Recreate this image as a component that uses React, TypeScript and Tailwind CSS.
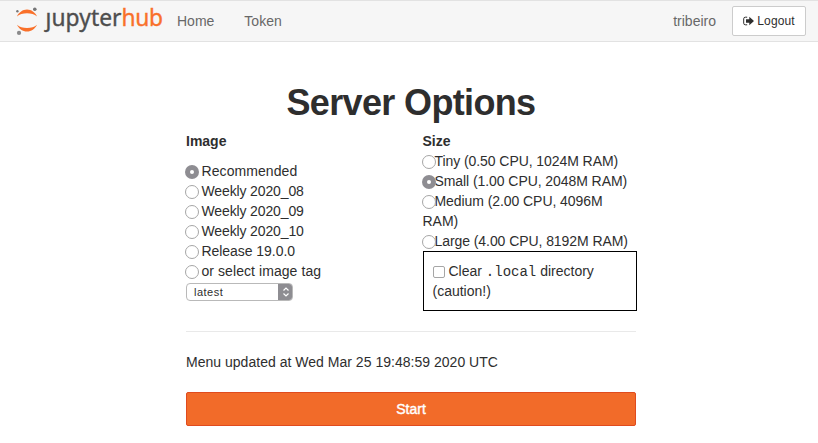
import type { ReactNode } from 'react';

function JupyterLogo() {
  return (
    <svg className="block h-[40px] w-[166px]" viewBox="0 0 166 40" role="img" aria-label="jupyterhub">
      <g transform="translate(0 0.4)">
        <path d="M17 15C19 11 22.700 8.200 27 8.200S35 11 37 15C34.600 12.800 31 11.900 27 11.900S19.400 12.800 17 15Z" fill="#f9702a" />
        <path d="M17 23.400C19.400 25.600 23 26.500 27 26.500S34.600 25.600 37 23.400C35 27.400 31.300 30.200 27 30.200S19 27.400 17 23.400Z" fill="#f9702a" />
        <circle cx="17.400" cy="9.800" r="1.200" fill="#767677" />
        <circle cx="34.800" cy="7.900" r="1.800" fill="#767677" />
        <circle cx="19" cy="31.500" r="2.100" fill="#8a8a8b" />
      </g>
      <text x="45.500" y="25.300" fill="#4e4e4e" stroke="#4e4e4e" strokeWidth="0.350" fontSize="22.800" textLength="76" lengthAdjust="spacing" className="font-['Noto_Sans','Open_Sans',sans-serif]">ȷupyter</text>
      <text x="121.500" y="25.300" fill="#f9702a" stroke="#f9702a" strokeWidth="0.350" fontSize="22.800" textLength="41.500" lengthAdjust="spacing" className="font-['Noto_Sans','Open_Sans',sans-serif]">hub</text>
    </svg>
  );
}

function Radio({ checked = false }: { checked?: boolean }) {
  return (
    <span
      className={
        checked
          ? 'relative top-[1px] flex size-[14px] shrink-0 items-center justify-center rounded-full bg-[#8e8d92]'
          : 'relative top-[1px] size-[14px] shrink-0 rounded-full border border-[#a6a6a6] bg-white'
      }
    >
      {checked && <span className="size-[4px] rounded-full bg-white" />}
    </span>
  );
}

function ImageOption({ checked, children }: { checked?: boolean; children: ReactNode }) {
  return (
    <label className="-ml-px flex h-5 items-center gap-[2.500px] whitespace-nowrap">
      <Radio checked={checked} />
      <span>{children}</span>
    </label>
  );
}

function SizeOption({ checked, children }: { checked?: boolean; children: ReactNode }) {
  return (
    <label className="-ml-px flex h-5 items-center whitespace-nowrap">
      <Radio checked={checked} />
      <span className="-ml-[1.500px] tracking-[-0.070px]">{children}</span>
    </label>
  );
}

export default function App() {
  return (
    <div className="h-[443px] overflow-hidden bg-white font-['Liberation_Sans',Arial,sans-serif] text-[14px] leading-5 text-[#2e2e2e]">
      <nav className="flex h-[42px] items-center border-y border-[#e2e2e2] bg-[#f6f6f6] text-[#686868]">
        <JupyterLogo />
        <a className="ml-[11px]">Home</a>
        <a className="ml-[30px]">Token</a>
        <span className="mr-[16px] ml-auto">tribeiro</span>
        <button className="mr-3 flex h-[30px] w-[74px] items-center justify-center gap-[3px] rounded-[2px] border border-[#cccccc] bg-white text-[12px] tracking-[0.100px] text-[#2e2e2e]">
          <svg className="block h-[10px] w-[11px]" viewBox="0 0 11 10">
            <path d="M4.200 1.200H2.300Q.7 1.200.7 2.800V7.200Q.7 8.800 2.300 8.800H4.200" fill="none" stroke="currentColor" />
            <path d="M6.300.8 11 5 6.300 9.200V6.700H3V3.300H6.300Z" fill="currentColor" />
          </svg>
          <span>Logout</span>
        </button>
      </nav>

      <main className="ml-[186px] w-[450px]">
        <h1 className="mt-[41px] text-center text-[36px] leading-10 font-bold tracking-[-0.650px] whitespace-nowrap">Server Options</h1>
        <div className="mt-2 flex">
          <section className="w-[237px] shrink-0">
            <h2 className="mb-[10px] font-bold">Image</h2>
            <ImageOption checked><span className="tracking-[0.080px]">Recommended</span></ImageOption>
            <ImageOption><span className="tracking-[-0.130px]">Weekly 2020_08</span></ImageOption>
            <ImageOption><span className="tracking-[-0.130px]">Weekly 2020_09</span></ImageOption>
            <ImageOption><span className="tracking-[-0.130px]">Weekly 2020_10</span></ImageOption>
            <ImageOption><span className="tracking-[-0.050px]">Release 19.0.0</span></ImageOption>
            <ImageOption><span className="tracking-[0.070px]">or select image tag</span></ImageOption>
            <div className="mt-[2px] flex h-[18px] w-[107px] items-center justify-between overflow-hidden rounded-[4px] border border-[#b9b9b9] bg-white pl-[7px] text-[11px] tracking-[0.5px]">
              <span>latest</span>
              <span className="-mr-px flex h-[18px] w-[15px] items-center justify-center bg-[#8e8d92]">
                <svg className="h-[10px] w-[8px]" viewBox="0 0 8 10" fill="none" stroke="white" strokeWidth="1.200">
                  <path d="M1.500 3.500 4 1 6.500 3.500M1.500 6.500 4 9 6.500 6.500" />
                </svg>
              </span>
            </div>
          </section>
          <section className="w-[214px] shrink-0">
            <h2 className="-ml-[0.500px] font-bold">Size</h2>
            <SizeOption>Tiny (0.50 CPU, 1024M RAM)</SizeOption>
            <SizeOption checked>Small (1.00 CPU, 2048M RAM)</SizeOption>
            <SizeOption>Medium (2.00 CPU, 4096M</SizeOption>
            <div className="-ml-[0.500px]">RAM)</div>
            <SizeOption>Large (4.00 CPU, 8192M RAM)</SizeOption>
            <div className="h-[60px] border border-black px-[9px] py-[9px] whitespace-nowrap">
              <div className="flex h-5 items-center">
                <span className="relative top-px mr-[3.500px] size-[12px] rounded-[2px] border border-[#a6a6a6] bg-white" />
                <span>Clear <code className="font-['Liberation_Mono',monospace] text-[14px]">.local</code> directory</span>
              </div>
              <div className="-ml-[0.500px]">(caution!)</div>
            </div>
          </section>
        </div>
        <hr className="mt-5 border-[#e9e9e9]" />
        <p className="mt-5 tracking-[0.020px]">Menu updated at Wed Mar 25 19:48:59 2020 UTC</p>
        <button className="mt-5 block h-[34px] w-full rounded-[2px] border border-[#e04b1e] bg-[#f26b29] text-white [-webkit-text-stroke:0.4px_white]">Start</button>
      </main>
    </div>
  );
}
